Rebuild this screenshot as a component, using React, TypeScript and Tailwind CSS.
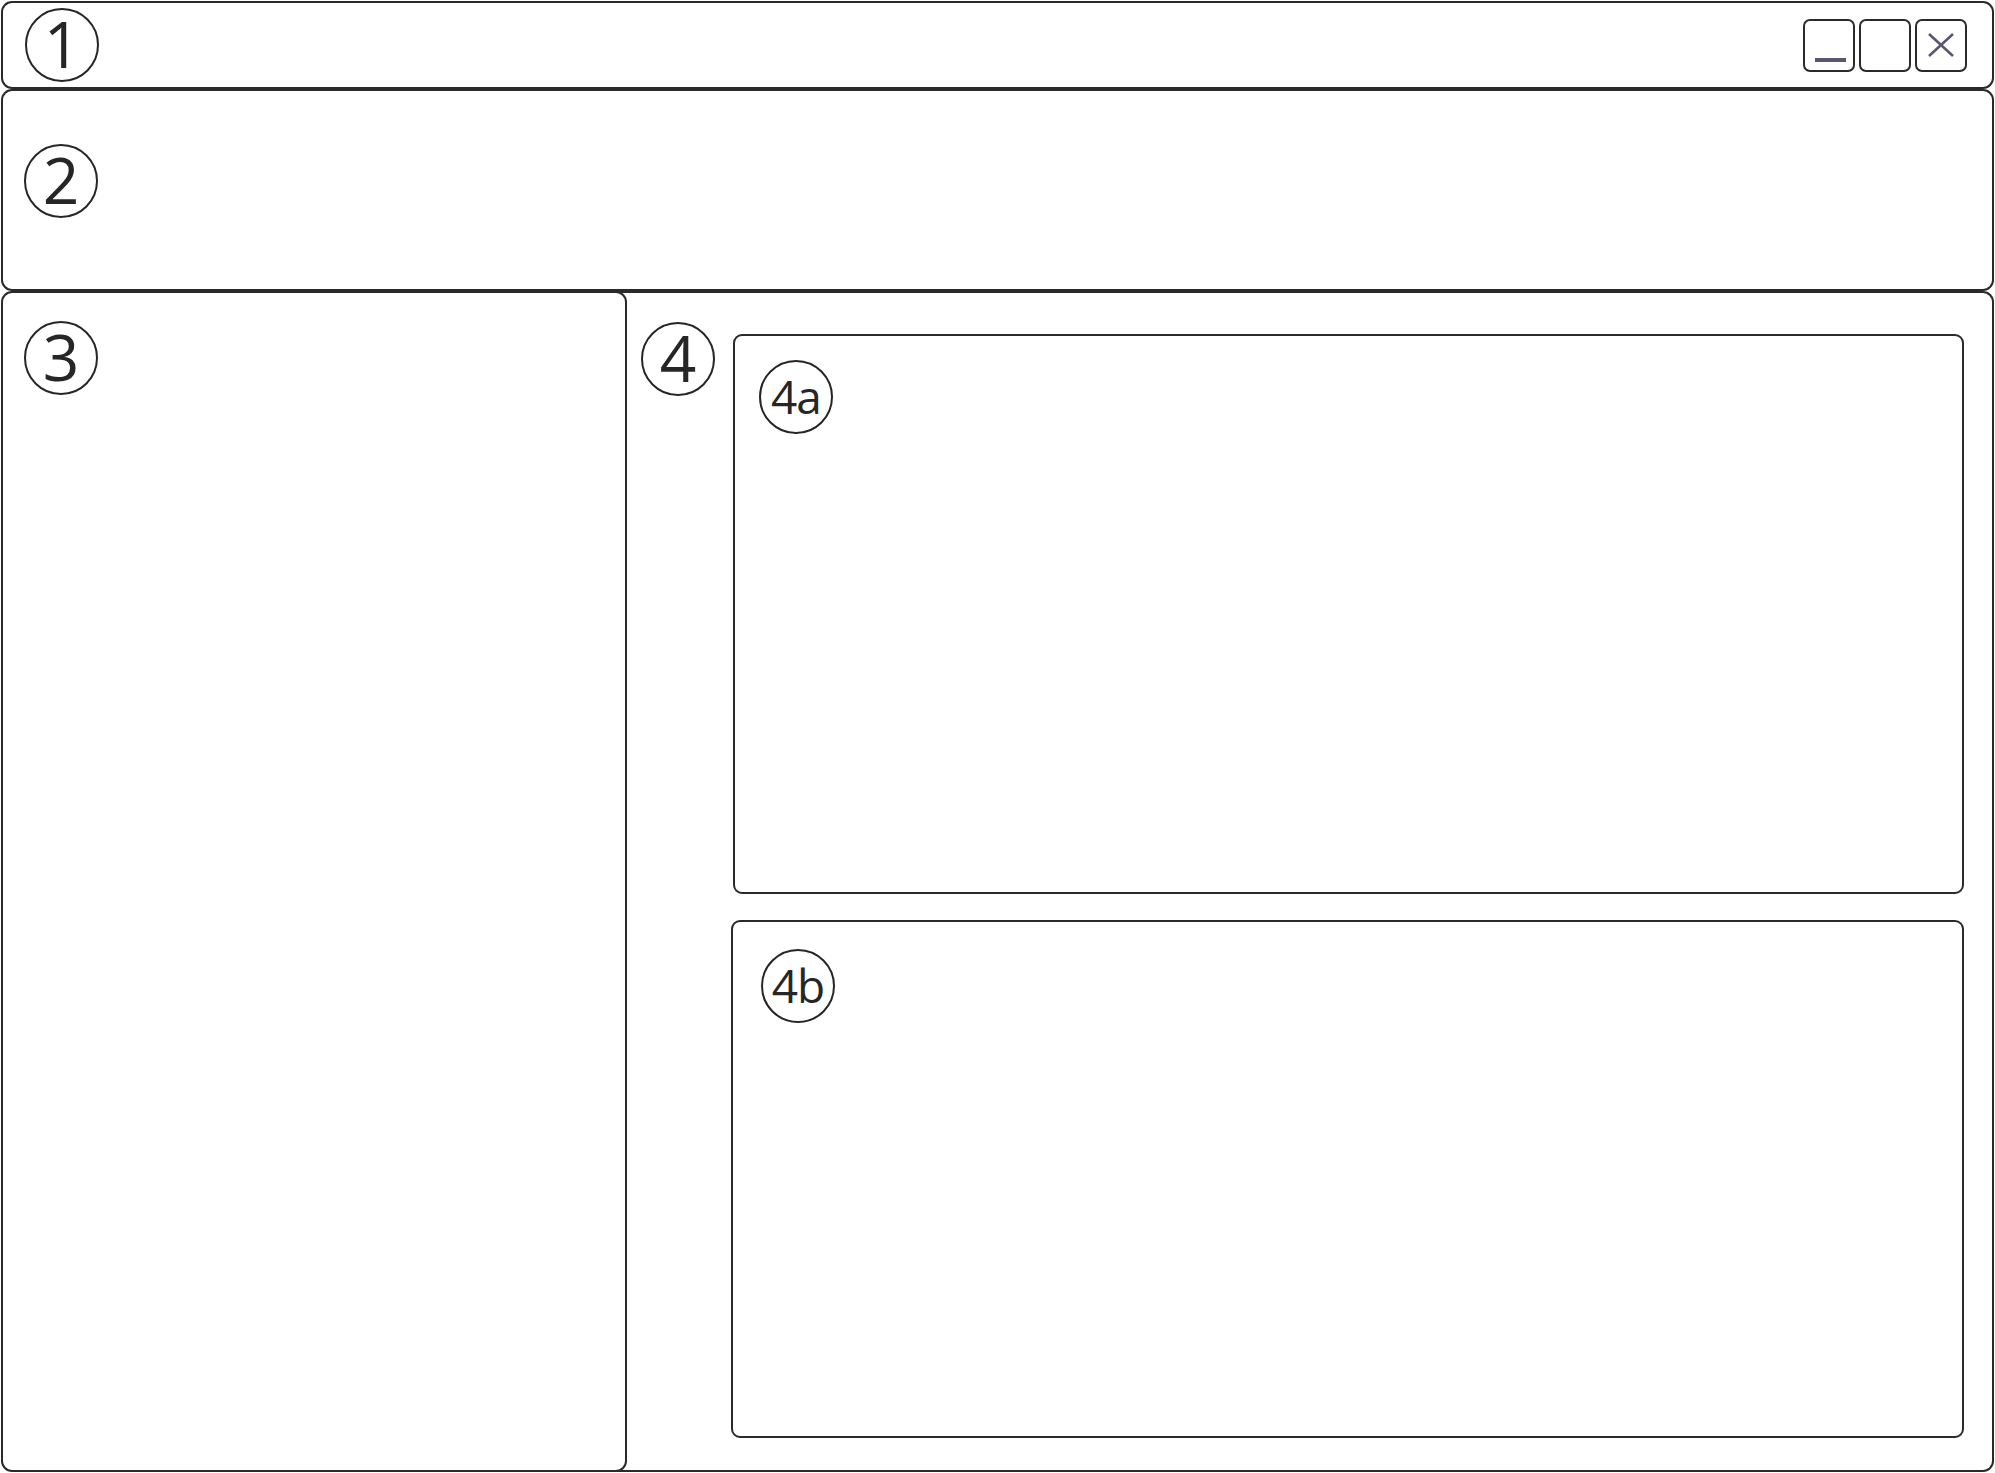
import React from "react";

const font = { fontFamily: '"Open Sans", "Noto Sans", sans-serif' };

function Badge({ label, small }: { label: string; small?: boolean }) {
  return (
    <div
      className="w-[74px] h-[74px] shrink-0 rounded-full border-2 border-[#262626] flex items-center justify-center text-[#262626]"
      style={font}
    >
      {small ? (
        <span className="text-[46px] leading-none tracking-[-1px] -mt-[2px]">{label}</span>
      ) : (
        <span className="text-[64px] leading-none -mt-[2px]">{label}</span>
      )}
    </div>
  );
}

function WinButton({ children }: { children?: React.ReactNode }) {
  return (
    <div className="w-[52px] h-[53px] rounded-[7px] border-2 border-[#2a2a2a] flex items-center justify-center relative">
      {children}
    </div>
  );
}

export default function App() {
  return (
    <div className="w-[1995px] h-[1473px] bg-white pt-[1px] pl-[1px] overflow-hidden">
      <div className="w-[1993px] flex flex-col">
        {/* 1 Title bar */}
        <div className="h-[88px] rounded-[11px] border-2 border-[#2a2a2a] flex items-center justify-between pl-[22px] pr-[25px]">
          <Badge label="1" />
          <div className="flex gap-[4px] items-center">
            <WinButton>
              <div className="absolute left-[10px] top-[37px] w-[31px] h-[4px] bg-[#5b5573]" />
            </WinButton>
            <WinButton />
            <WinButton>
              <svg width="28" height="26" viewBox="0 0 28 26">
                <path d="M2 2 L26 24 M26 2 L2 24" stroke="#5b5573" strokeWidth="2.6" fill="none" />
              </svg>
            </WinButton>
          </div>
        </div>

        {/* 2 Toolbar */}
        <div className="h-[202px] rounded-[11px] border-2 border-[#2a2a2a] pl-[21px] pt-[53px]">
          <Badge label="2" />
        </div>

        {/* bottom row */}
        <div className="h-[1181px] flex">
          {/* 3 sidebar */}
          <div className="w-[626px] h-full rounded-[11px] border-2 border-[#2a2a2a] pl-[21px] pt-[28px] relative z-10">
            <Badge label="3" />
          </div>
          {/* 4 main */}
          <div className="flex-1 h-full -ml-[11px] rounded-[11px] border-2 border-[#2a2a2a] border-l-0 rounded-l-none flex pl-[25px] pt-[29px] pr-[28px]">
            <Badge label="4" />
            <div className="flex-1 flex flex-col ml-[16px]">
              <div className="ml-[2px] h-[560px] mt-[12px] rounded-[9px] border-2 border-[#2a2a2a] pl-[24px] pt-[24px]">
                <Badge label="4a" small />
              </div>
              <div className="h-[518px] mt-[26px] rounded-[9px] border-2 border-[#2a2a2a] pl-[28px] pt-[27px]">
                <Badge label="4b" small />
              </div>
            </div>
          </div>
        </div>
      </div>
    </div>
  );
}
